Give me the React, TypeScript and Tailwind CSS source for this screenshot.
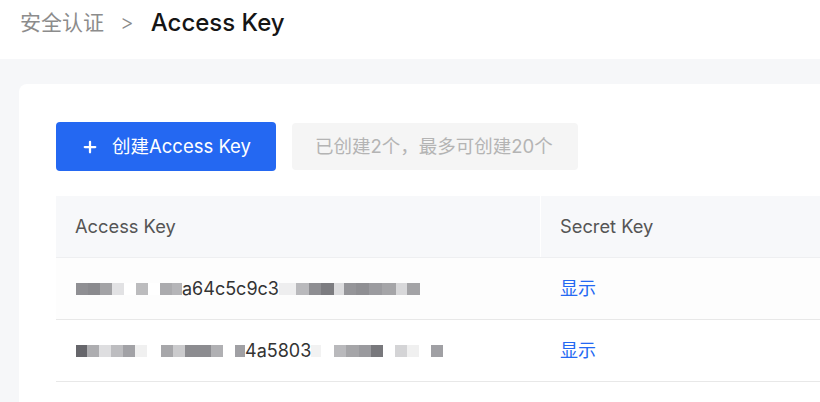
import { Plus } from "lucide-react";

type Seg = { w?: number; c?: string; t?: string };

const row1: Seg[] = [
  { w: 12, c: "#8f8f93" }, { w: 12, c: "#8a8a8e" }, { w: 12, c: "#a3a3a6" }, { w: 12, c: "#e2e2e4" },
  { w: 12, c: "#ffffff" }, { w: 12, c: "#bcbcbe" }, { w: 12, c: "#ffffff" }, { w: 12, c: "#ababae" }, { w: 10, c: "#b5b5b8" },
  { t: "a64c5c9c3" },
  { w: 17, c: "#eeeeef" }, { w: 13, c: "#b9b9bc" }, { w: 12, c: "#8e8e92" }, { w: 13, c: "#7c7c80" }, { w: 10, c: "#dcdcde" },
  { w: 12, c: "#959599" }, { w: 13, c: "#8f8f93" }, { w: 13, c: "#9b9b9f" }, { w: 14, c: "#a5a5a8" }, { w: 11, c: "#d8d8da" }, { w: 13, c: "#a3a3a6" },
];

const row2: Seg[] = [
  { w: 11, c: "#66666b" }, { w: 12, c: "#adadb0" }, { w: 12, c: "#dedee0" }, { w: 12, c: "#bdbdc0" }, { w: 12, c: "#a2a2a6" }, { w: 12, c: "#f0f0f0" },
  { w: 14, c: "#ffffff" }, { w: 12, c: "#a7a7aa" }, { w: 12, c: "#cbcbcd" }, { w: 26, c: "#8c8c90" }, { w: 12, c: "#b0b0b3" },
  { w: 12, c: "#ffffff" }, { w: 10, c: "#a0a0a4" },
  { t: "4a5803" },
  { w: 10, c: "#f2f2f2" }, { w: 13, c: "#ffffff" }, { w: 12, c: "#b9b9bc" }, { w: 13, c: "#a5a5a8" }, { w: 12, c: "#9a9a9e" }, { w: 12, c: "#78787c" },
  { w: 12, c: "#ffffff" }, { w: 12, c: "#d4d4d6" }, { w: 12, c: "#f0f0f0" }, { w: 12, c: "#ffffff" }, { w: 12, c: "#a0a0a4" },
];

function Masked({ segs }: { segs: Seg[] }) {
  return (
    <div className="flex items-center">
      {segs.map((s, i) =>
        s.t ? (
          <span key={i} className="text-[18px] leading-none text-[#333]">
            {s.t}
          </span>
        ) : (
          <span key={i} className="h-[12px] block" style={{ width: s.w, background: s.c }} />
        )
      )}
    </div>
  );
}

export default function App() {
  return (
    <div className="w-[820px] h-[402px] overflow-hidden bg-[#f6f7f9] font-['Inter','Noto_Sans_CJK_SC',sans-serif]">
      {/* header */}
      <div className="h-[59px] bg-white flex items-center pl-[20px] pb-[14px]">
        <span className="text-[21px] text-[#8c8c8c]">安全认证</span>
        <span className="text-[21px] font-light text-[#8c8c8c] ml-[16px] mr-[17px]">&gt;</span>
        <span className="text-[24px] text-[#151515] font-medium">Access Key</span>
      </div>

      {/* card */}
      <div className="ml-[19px] mt-[25px] bg-white rounded-tl-[8px] h-[400px] pl-[37px] pt-[38px]">
        <div className="flex items-center gap-[16px]">
          <button className="w-[220px] h-[49px] rounded-[4px] bg-[#2468f2] text-white flex items-center pl-[25px]">
            <Plus size={18} strokeWidth={3} />
            <span className="ml-[13px] text-[18.5px]">创建Access Key</span>
          </button>
          <div className="w-[286px] h-[47px] rounded-[4px] bg-[#f5f5f5] text-[#b4b4b4] text-[18.5px] flex items-center pl-[23px]">
            已创建2个，最多可创建20个
          </div>
        </div>

        {/* table */}
        <div className="mt-[25px]">
          <div className="h-[62px] bg-[#f7f8fa] flex border-b border-[#eeeff1] text-[18.3px] text-[#555]">
            <div className="w-[485px] flex items-center pl-[19px] border-r border-white">Access Key</div>
            <div className="flex items-center pl-[19px]">Secret Key</div>
          </div>
          <div className="h-[62px] bg-[#fdfdfd] flex border-b border-[#e8e8e8]">
            <div className="w-[485px] flex items-center pl-[20px]">
              <Masked segs={row1} />
            </div>
            <div className="flex items-center pl-[19px] text-[18px] text-[#2468f2]">显示</div>
          </div>
          <div className="h-[62px] bg-white flex border-b border-[#e8e8e8]">
            <div className="w-[485px] flex items-center pl-[20px]">
              <Masked segs={row2} />
            </div>
            <div className="flex items-center pl-[19px] text-[18px] text-[#2468f2]">显示</div>
          </div>
        </div>
      </div>
    </div>
  );
}
